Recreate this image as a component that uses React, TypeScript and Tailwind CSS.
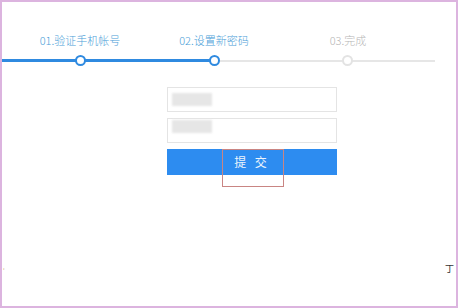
import React from 'react';

const steps = [
  { label: '01.验证手机帐号', done: true },
  { label: '02.设置新密码', done: true },
  { label: '03.完成', done: false },
];

const App = () => {
  return (
    <div
      className="w-[458px] h-[308px] bg-white border-2 border-[#dcb4df] overflow-hidden relative"
      style={{ fontFamily: '"Noto Sans CJK SC", "Liberation Sans", sans-serif' }}
    >
      {/* step labels */}
      <div className="grid grid-cols-[134px_134px_134px] pl-[11px] pt-[31px]">
        {steps.map(step => (
          <div
            key={step.label}
            className={`text-center text-[11px] leading-[14px] font-light ${step.done ? 'text-[#4ba0d8]' : 'text-[#b5b5b5]'}`}
          >
            {step.label}
          </div>
        ))}
      </div>

      {/* progress track */}
      <div className="relative mt-[8px] h-[11px] flex items-center">
        <div className="w-[212px] h-[3px] bg-[#2f8ae0]" />
        <div className="w-[221px] h-[2px] bg-[#e6e6e6]" />
        <div className="absolute left-[73px] top-0 w-[11px] h-[11px] rounded-full border-[2.5px] border-[#2f8ae0] bg-white" />
        <div className="absolute left-[207px] top-0 w-[11px] h-[11px] rounded-full border-[2.5px] border-[#2f8ae0] bg-white" />
        <div className="absolute left-[340px] top-0 w-[11px] h-[11px] rounded-full border-2 border-[#e3e3e3] bg-white" />
      </div>

      {/* form */}
      <div className="ml-[165px] mt-[21px] w-[170px] flex flex-col gap-[6px]">
        <div className="h-[25px] border border-[#e4e4e4] flex items-center pl-[4px]">
          <div className="w-[40px] h-[13px] bg-[#e6e6e6] blur-[1px]" />
        </div>
        <div className="h-[25px] border border-[#e4e4e4] flex items-start pt-[1px] pl-[4px]">
          <div className="w-[40px] h-[13px] bg-[#e6e6e6] blur-[1px]" />
        </div>
        <div className="relative">
          <button className="w-full h-[26px] bg-[#2d8cf0] text-[#eef5fd] text-[12px] tracking-[3px] flex items-center justify-center">
            提 交
          </button>
          <div className="absolute left-[55px] top-0 w-[62px] h-[38px] border border-[#c98583]" />
        </div>
      </div>

      {/* edge artifacts */}
      <div className="absolute left-[1px] top-[264px] text-[6px] text-[#c9a06a]">'</div>
      <div className="absolute right-[2px] top-[262px] text-[9px] leading-[10px] text-[#333]">丁</div>
    </div>
  );
};

export default App;
